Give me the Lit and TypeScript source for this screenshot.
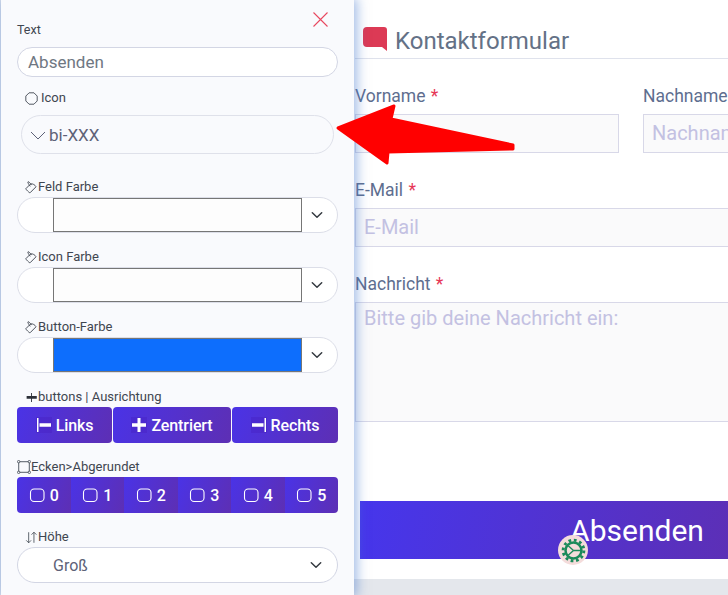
import { LitElement, html, css, svg } from "lit";
import { customElement } from "lit/decorators.js";

const ico = (body: unknown, size = 16) => html`<svg class="bi" width=${size} height=${size} viewBox="0 0 16 16" fill="none">${body}</svg>`;
const bucket = svg`<g stroke="#3f4650" stroke-width="1.15" stroke-linejoin="round" stroke-linecap="round"><path d="M5.9 4.6 1 9.5c-.4.4 4.700 5.500 5.200 5l7.200-7.200C14 6.200 9.500 2.800 7.800 3.400z"/><path d="M6.200 6.200C4.200 3.600 3 1.500 3.700 1c.8-.5 2.700 1.400 4.100 3.600"/></g>`;
const chevron = html`<svg class="chev" width="12" height="12" viewBox="0 0 12 12"><path d="M1.300 3.800 6 8.200l4.700-4.400" fill="none" stroke="#343a40" stroke-width="1.500" stroke-linecap="round" stroke-linejoin="round"/></svg>`;
const rounded = html`<svg class="bi" width="16" height="16" viewBox="0 0 16 16"><rect x="1.500" y="2" width="13.500" height="12.500" rx="3.600" fill="none" stroke="currentColor" stroke-width="1.100"/></svg>`;

@customElement("app-root")
export class AppRoot extends LitElement {
  static styles = css`
    :host { display: block; width: 728px; height: 595px; overflow: hidden; position: relative; font-family: Roboto, "Liberation Sans", sans-serif; background: #e4e7ec; }
    * { box-sizing: border-box; }
    .page { display: flex; height: 595px; }
    .side { position: relative; z-index: 2; flex: 0 0 353px; margin-left: 1px; height: 595px; background: #f9fafd; box-shadow: 1px 0 11px 2px rgba(70,120,205,.5); padding: 12px 16px 0 16px; }
    .close { display: flex; justify-content: flex-end; height: 15px; padding-right: 10px; }
    .lab { display: flex; align-items: center; font-size: 13px; line-height: 16px; height: 16px; color: #3f4650; }
    .lab .bi { flex: none; }
    .text-lab { margin-top: -5px; margin-bottom: 9px; font-size: 12.500px; }
    .in { height: 30px; border: 1px solid #d3d6e4; border-radius: 15px; background: #fff; color: #6f7782; font-size: 17px; line-height: 29px; padding-left: 10px; }
    .icon-lab { margin: 13px 0 9px 8px; gap: 3px; }
    .icon-lab .bi { width: 13px; height: 13px; }
    .sel-ico { margin: 0 4px; height: 39px; border: 1px solid #dfe1ea; border-radius: 20px; color: #5e6278; font-size: 17px; display: flex; align-items: center; gap: 3px; padding-left: 9px; }
    .sel-ico svg { margin-left: -1px; }
    .f { height: 70px; }
    .f .lab { height: 20px; padding-left: 8px; }
    .f .lab .bi { width: 13px; height: 13px; }
    .first { margin-top: 23px; }
    .col { height: 36px; border: 1px solid #dcdee8; border-radius: 18px; background: #fff; display: flex; align-items: center; padding: 0 0 0 35px; }
    .swatch { width: 249px; height: 34px; border: 1px solid #767676; background: #fdfdfd; }
    .blue { background: #0d6efd; }
    .col .chev { margin-left: 9px; }
    .group { display: grid; height: 36px; gap: 1px; }
    .three { grid-template-columns: 95px 118px 106px; }
    .six { grid-template-columns: repeat(6, 1fr); gap: 0; border-radius: 4px; overflow: hidden; }
    .b { display: flex; align-items: center; justify-content: center; gap: 4px; color: #fff; font-size: 16px; font-weight: 500; letter-spacing: -.1px; background: linear-gradient(110deg, #4a33e6, #5d2fb4); border-radius: 4px; }
    .six .b { border-radius: 0; gap: 5px; font-weight: 500; }
    .shade { background: rgba(70,30,190,.35); }
    .hsel { height: 36px; border: 1px solid #d3d6e4; border-radius: 18px; background: #fff; display: flex; align-items: center; justify-content: space-between; padding: 0 15px 0 35px; color: #5e6278; font-size: 16px; }
    .main { flex: 1; min-width: 0; height: 579px; background: #fff; overflow: hidden; padding-left: 1px; }
    .form { width: 552px; }
    .head { height: 59px; border-bottom: 1px solid #dfe2ec; padding: 25px 0 0 8px; display: flex; align-items: flex-start; gap: 8px; color: #647186; font-size: 24px; line-height: 32px; }
    .head svg { margin-top: 2px; flex: none; }
    .row { display: grid; grid-template-columns: 264px 264px; gap: 24px; }
    .fld { margin-top: 24px; }
    .lb { font-size: 17.500px; line-height: 26px; height: 31px; color: #5e6e8f; }
    .lb i { font-style: normal; color: #e63757; margin-left: 1px; }
    .inp { height: 39px; border: 1px solid #d8d8e8; background: #fafafb; color: #c3c1e2; font-size: 20px; line-height: 36px; padding-left: 8px; white-space: nowrap; overflow: hidden; }
    .ta { height: 120px; border: 1px solid #d8d8e8; background: #fafafb; color: #c3c1e2; font-size: 20px; line-height: 27px; padding: 2px 8px; }
    .send { margin: 79px 0 0 5px; width: 554px; height: 58px; background: linear-gradient(100deg, #4636ec, #5d2fb4 70%); color: #fff; font-size: 30px; display: flex; align-items: center; justify-content: center; }
    .arrow { position: absolute; left: 331px; top: 97px; z-index: 3; }
    .gear { position: absolute; left: 558px; top: 535px; z-index: 3; width: 30px; height: 30px; border-radius: 50%; background: #f4dcdb; display: flex; align-items: center; justify-content: center; }
  `;

  render() {
    return html`
      <div class="page">
        <aside class="side">
          <div class="close"><svg width="15" height="15" viewBox="0 0 15 15"><path d="M.5.5l14 14M14.500.5l-14 14" stroke="#e8485f" stroke-width="1.100"/></svg></div>
          <div class="lab text-lab">Text</div>
          <div class="in">Absenden</div>
          <div class="lab icon-lab"><svg class="bi" viewBox="0 0 16 16"><path d="M5 1h6l4 4v6l-4 4H5l-4-4V5z" fill="none" stroke="#3f4650" stroke-width="1.100" stroke-linejoin="round"/></svg>Icon</div>
          <div class="sel-ico"><svg width="16" height="16" viewBox="0 0 16 16"><path d="M1 5l7 7 7-7" fill="none" stroke="#5e6278" stroke-width="1"/></svg>bi-XXX</div>

          <div class="f first"><div class="lab">${ico(bucket)}Feld Farbe</div><div class="col"><div class="swatch"></div>${chevron}</div></div>
          <div class="f"><div class="lab">${ico(bucket)}Icon Farbe</div><div class="col"><div class="swatch"></div>${chevron}</div></div>
          <div class="f"><div class="lab">${ico(bucket)}Button-Farbe</div><div class="col"><div class="swatch blue"></div>${chevron}</div></div>

          <div class="f">
            <div class="lab"><svg class="bi" viewBox="0 0 16 16"><path d="M2 6.200h12.500v3.400H2zM7.500 2.500h1.100v11H7.500z" fill="#2c3038"/></svg>buttons | Ausrichtung</div>
            <div class="group three">
              <div class="b"><svg class="bi shade" width="16" height="16" viewBox="0 0 16 16"><path d="M1 1h1.500v14H1zM3.500 6.200h11.500v3.500H3.500z" fill="currentColor"/></svg>Links</div>
              <div class="b"><svg class="bi shade" width="16" height="16" viewBox="0 0 16 16"><path d="M1 6.200h14v3.500H1zM6.500 1h3v14h-3z" fill="currentColor"/></svg>Zentriert</div>
              <div class="b"><svg class="bi shade" width="16" height="16" viewBox="0 0 16 16"><path d="M13.500 1H15v14h-1.500zM1 6.200h11.500v3.500H1z" fill="currentColor"/></svg>Rechts</div>
            </div>
          </div>

          <div class="f">
            <div class="lab" style="padding-left:0"><svg class="bi" viewBox="0 0 16 16" style="width:14px;height:14px"><rect x="2" y="2" width="12" height="12" fill="none" stroke="#3f4650" stroke-width="1"/><g fill="#f9fafd" stroke="#3f4650" stroke-width=".9"><rect x=".6" y=".6" width="2.600" height="2.600" rx="1"/><rect x="12.800" y=".6" width="2.600" height="2.600" rx="1"/><rect x=".6" y="12.800" width="2.600" height="2.600" rx="1"/><rect x="12.800" y="12.800" width="2.600" height="2.600" rx="1"/></g></svg>Ecken&gt;Abgerundet</div>
            <div class="group six">
              ${[0, 1, 2, 3, 4, 5].map((n) => html`<div class="b">${rounded}${n}</div>`)}
            </div>
          </div>

          <div class="f">
            <div class="lab"><svg class="bi" viewBox="0 0 16 16"><path d="M4.500 1.500v13M1.500 11.500l3 3 3-3M11 14.500v-13M8 4.500l3-3 3 3" fill="none" stroke="#3f4650" stroke-width="1"/></svg>Höhe</div>
            <div class="hsel">Groß ${chevron}</div>
          </div>
        </aside>

        <main class="main">
          <div class="form">
            <div class="head">
              <svg width="24" height="24" viewBox="0 0 24 24"><path d="M4 0h17a3 3 0 0 1 3 3v21l-5-4H4a4 4 0 0 1-4-4V4a4 4 0 0 1 4-4z" fill="#dc3a55"/></svg>
              <span>Kontaktformular</span>
            </div>
            <div class="row">
              <div class="fld"><div class="lb">Vorname <i>*</i></div><div class="inp"></div></div>
              <div class="fld"><div class="lb">Nachname</div><div class="inp">Nachname</div></div>
            </div>
            <div class="fld"><div class="lb">E-Mail <i>*</i></div><div class="inp">E-Mail</div></div>
            <div class="fld"><div class="lb">Nachricht <i>*</i></div><div class="ta">Bitte gib deine Nachricht ein:</div></div>
            <div class="send">Absenden</div>
          </div>
        </main>
      </div>

      <svg class="arrow" width="195" height="72" viewBox="0 0 195 72"><path d="M7 31L63 9 60 22 182 48 182 52 57 55 56 66z" fill="#ff0000" stroke="#ff0000" stroke-width="3" stroke-linejoin="round"/></svg>

      <div class="gear">
        <svg width="25" height="25" viewBox="0 0 26 26"><g stroke="#1b8a5a" fill="none"><circle cx="13" cy="13" r="8.300" stroke-width="2.600"/><circle cx="13" cy="13" r="10.800" stroke-width="3" stroke-dasharray="2.830 2.830"/><path d="M13 13L7.500 8M13 13L7.500 18M13 13h8" stroke-width="1.400"/></g></svg>
      </div>
    `;
  }
}
